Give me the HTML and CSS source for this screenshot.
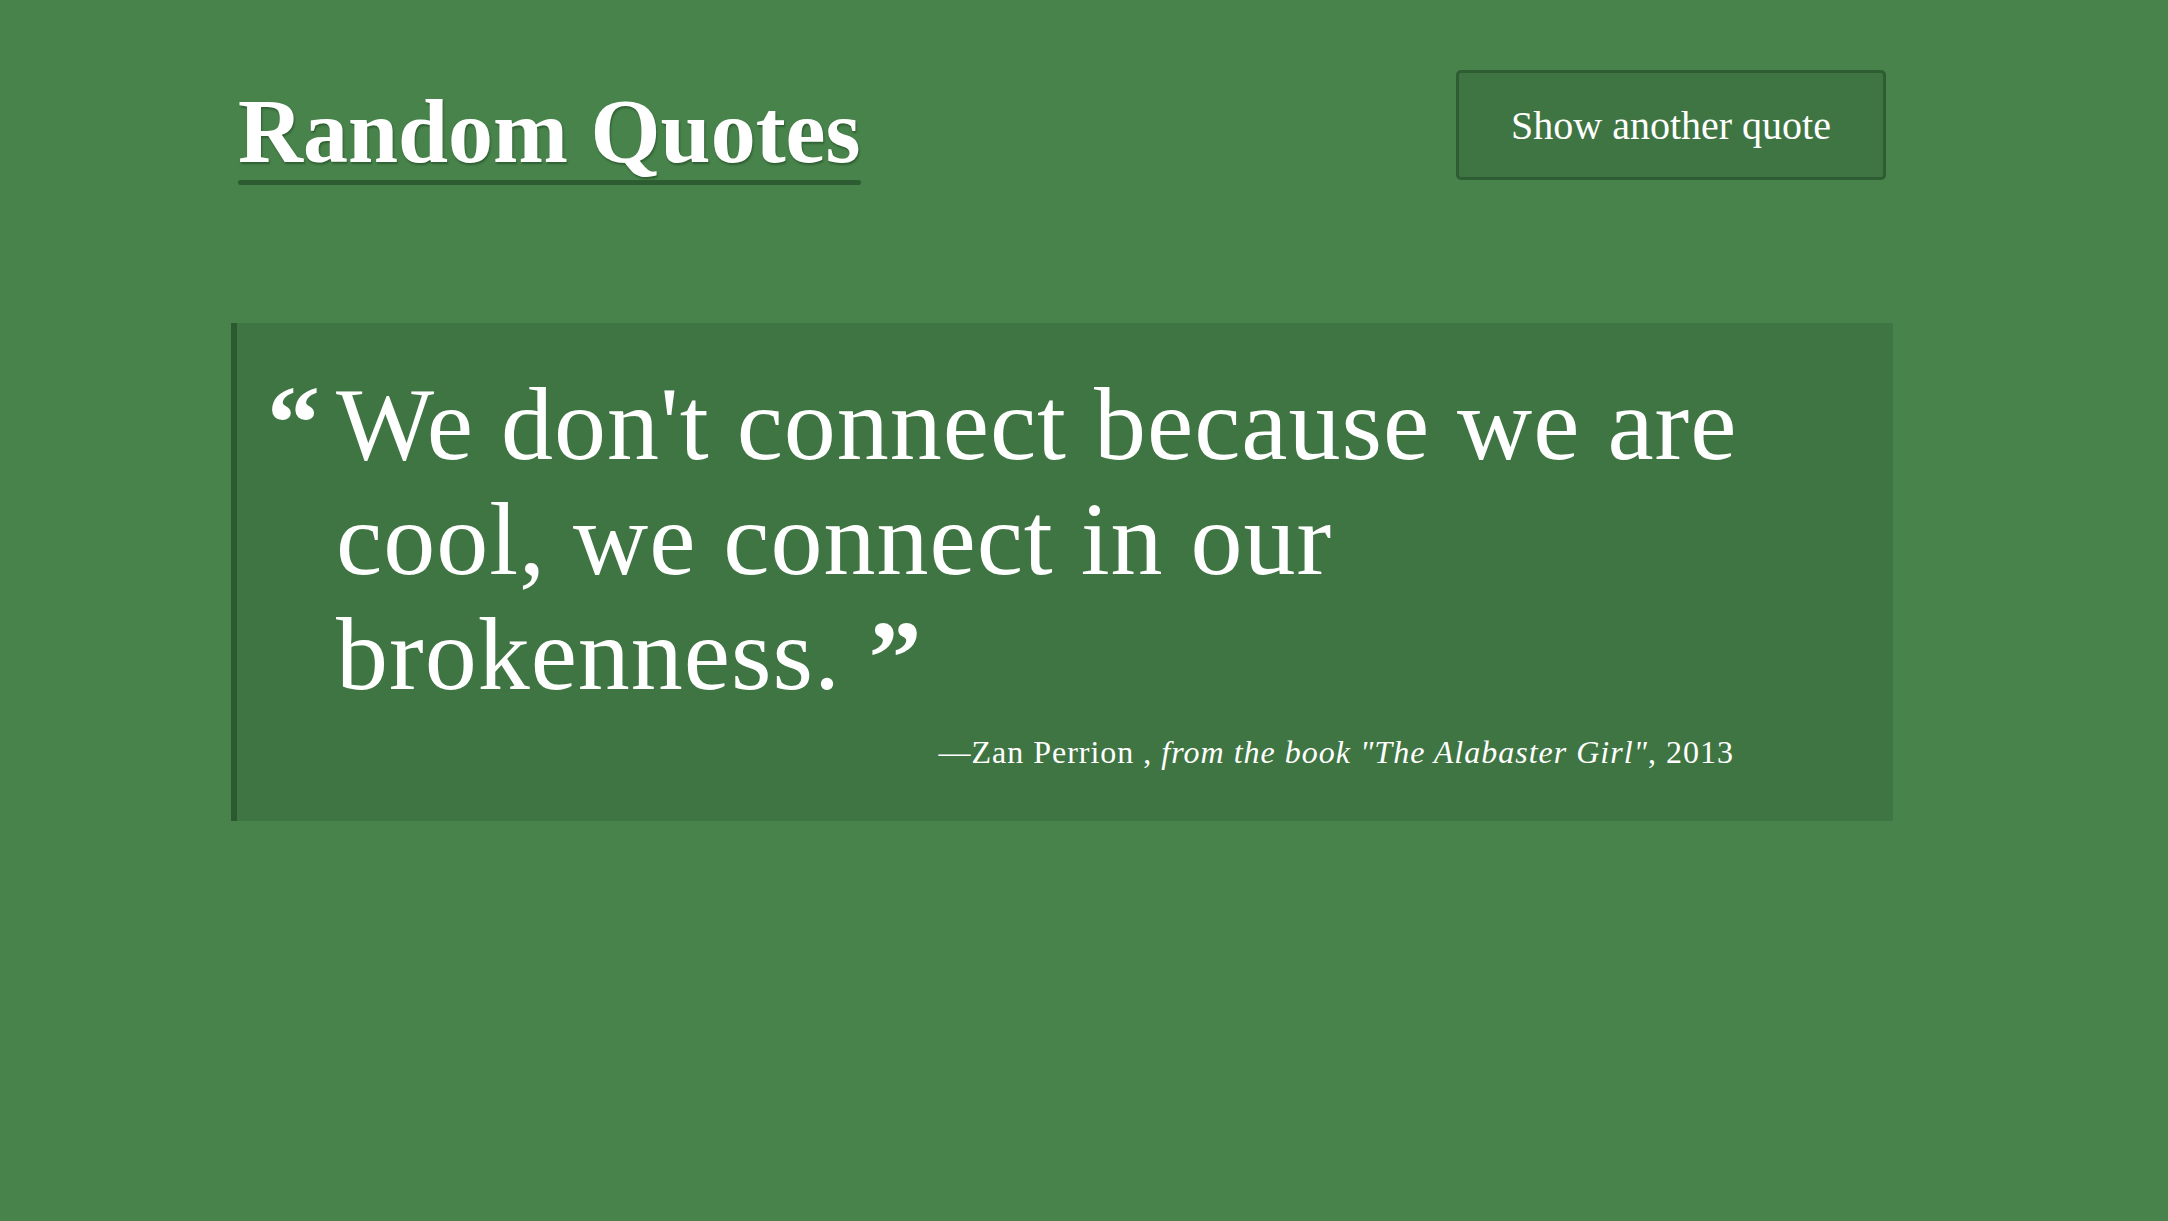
FILE: index.html
```html
<!DOCTYPE html>
<html lang="en">
<head>
<meta charset="utf-8">
<title>Random Quotes</title>
<link rel="stylesheet" href="styles.css">
</head>
<body>
<div class="page">
  <header class="header">
    <h1 class="title">Random Quotes</h1>
    <button class="btn" type="button">Show another quote</button>
  </header>
  <blockquote class="quote-box">
    <span class="mark-open">“</span>
    <div class="quote-body">
      <p class="quote-text">We don't connect because we are cool, we connect in our brokenness.</p>
      <p class="attribution">—Zan Perrion , <em>from the book "The Alabaster Girl"</em>, 2013</p>
    </div>
  </blockquote>
</div>
</body>
</html>
```

FILE: styles.css
```css
html, body {
  margin: 0;
  padding: 0;
  background: #47834a;
  min-height: 100%;
}

body {
  font-family: "Liberation Serif", "Times New Roman", serif;
  color: #ffffff;
}

.page {
  padding: 70px 282px 0 238px;
}

.header {
  display: flex;
  justify-content: space-between;
  align-items: flex-start;
}

.title {
  display: inline-block;
  margin: 17px 0 0 0;
  font-size: 90px;
  font-weight: 700;
  line-height: 90px;
  text-shadow: 1px 2px 2px rgba(20, 50, 22, 0.45);
}

.title::after {
  content: "";
  display: block;
  height: 5px;
  margin-top: 3px;
  border-radius: 3px;
  background: #2e5c32;
}

.btn {
  width: 430px;
  height: 110px;
  margin: 0;
  padding: 29px 0 27px 0;
  background: #3f7543;
  border: 3px solid #2f5d33;
  border-radius: 5px;
  color: #ffffff;
  font-family: "Liberation Serif", "Times New Roman", serif;
  font-size: 40px;
  line-height: 1.2;
  box-sizing: border-box;
  cursor: pointer;
}

.quote-box {
  display: flex;
  margin: 138px -7px 0 -7px;
  padding: 43px 133px 50px 30px;
  background: #3f7543;
  border-left: 6px solid #2c5a30;
}

.mark-open {
  flex: 0 0 69px;
  font-size: 106px;
  font-weight: 700;
  line-height: 115px;
}

.quote-body {
  flex: 1 1 auto;
  min-width: 0;
}

.quote-text {
  margin: 0;
  font-size: 104px;
  line-height: 115px;
  letter-spacing: 1px;
}

.quote-text::after {
  content: " ”";
  font-size: 106px;
  font-weight: 700;
  line-height: 0;
  vertical-align: -5px;
}

.attribution {
  margin: 22px 0 0 0;
  padding-right: 26px;
  text-align: right;
  font-size: 32px;
  line-height: 1.2;
  letter-spacing: 1px;
}

.attribution em {
  font-style: italic;
}
```
